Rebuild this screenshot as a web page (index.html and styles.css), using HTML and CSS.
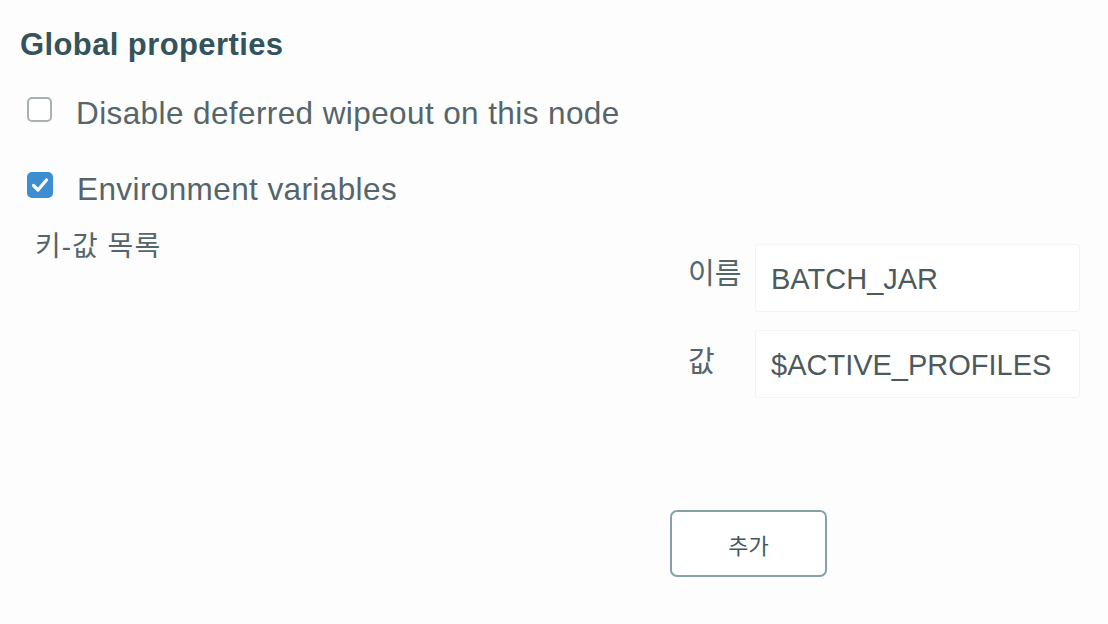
FILE: index.html
```html
<!DOCTYPE html>
<html lang="ko">
<head>
<meta charset="utf-8">
<link rel="stylesheet" href="styles.css">
</head>
<body>
<div class="page">
  <h2 class="title">Global properties</h2>
  <div class="options">
    <label class="opt">
      <span class="box"></span>
      <span class="opt-text">Disable deferred wipeout on this node</span>
    </label>
    <label class="opt">
      <span class="box checked">
        <svg viewBox="0 0 26 26" width="26" height="26"><path d="M6.5 13.5 L11 18 L19.5 8" fill="none" stroke="#fff" stroke-width="3.2" stroke-linecap="round" stroke-linejoin="round"/></svg>
      </span>
      <span class="opt-text">Environment variables</span>
    </label>
  </div>
  <div class="kv">
    <div class="kv-label">키-값 목록</div>
    <div class="kv-right">
      <div class="fields">
        <span class="f-label">이름</span>
        <div class="f-input">BATCH_JAR</div>
        <span class="f-label f-label2">값</span>
        <div class="f-input">$ACTIVE_PROFILES</div>
      </div>
      <div class="actions">
        <button class="add">추가</button>
      </div>
    </div>
  </div>
</div>
</body>
</html>
```
FILE: styles.css
```css
html, body {
  margin: 0;
  padding: 0;
  background: #fdfdfd;
}
body {
  width: 1108px;
  height: 624px;
  overflow: hidden;
  font-family: "Liberation Sans", "Noto Sans CJK KR", sans-serif;
  color: #4f5d61;
}
.page {
  padding: 26px 0 0 20px;
}
.title {
  margin: 0;
  font-size: 31px;
  font-weight: bold;
  color: #34535a;
  letter-spacing: 0.4px;
  line-height: 38px;
}
.options {
  margin-top: 28px;
  display: flex;
  flex-direction: column;
  gap: 42px;
}
.opt {
  display: flex;
  align-items: center;
  gap: 24px;
  padding-left: 7px;
  height: 34px;
}
.box {
  width: 25px;
  height: 25px;
  border: 2px solid #a8b0b2;
  border-radius: 5px;
  box-sizing: border-box;
  background: #fff;
  flex: none;
}
.box.checked {
  border: none;
  background: #3c8ed0;
  width: 26px;
  height: 26px;
}
.box svg { display: block; }
.opt-text {
  font-size: 31.5px;
  letter-spacing: 0.4px;
  color: #55656a;
  position: relative;
  top: 4px;
  white-space: nowrap;
}
.kv {
  display: grid;
  grid-template-columns: 650px 1fr;
  margin-top: 12px;
}
.kv-label {
  padding-left: 15px;
  padding-top: 10px;
  font-size: 28px;
  letter-spacing: 1px;
  color: #55656a;
}
.kv-right {
  display: flex;
  flex-direction: column;
}
.fields {
  display: grid;
  grid-template-columns: 67px 325px;
  row-gap: 18px;
  padding-top: 30px;
  padding-left: 18px;
}
.f-label {
  font-size: 29px;
  color: #55656a;
  padding-top: 6px;
}
.f-label2 { padding-top: 8px; }
.f-input {
  height: 68px;
  box-sizing: border-box;
  border: 1px solid #f2f4f4;
  border-radius: 3px;
  padding: 2px 15px 0;
  display: flex;
  align-items: center;
  font-size: 29px;
  color: #4c5a5e;
  background: #fff;
  white-space: nowrap;
}
.actions {
  margin-top: 112px;
}
.add {
  width: 157px;
  height: 67px;
  border: 2px solid #86a1a5;
  border-radius: 7px;
  background: #fff;
  font-family: "Noto Sans CJK KR", sans-serif;
  font-size: 22px;
  color: #3d5a60;
}
```
